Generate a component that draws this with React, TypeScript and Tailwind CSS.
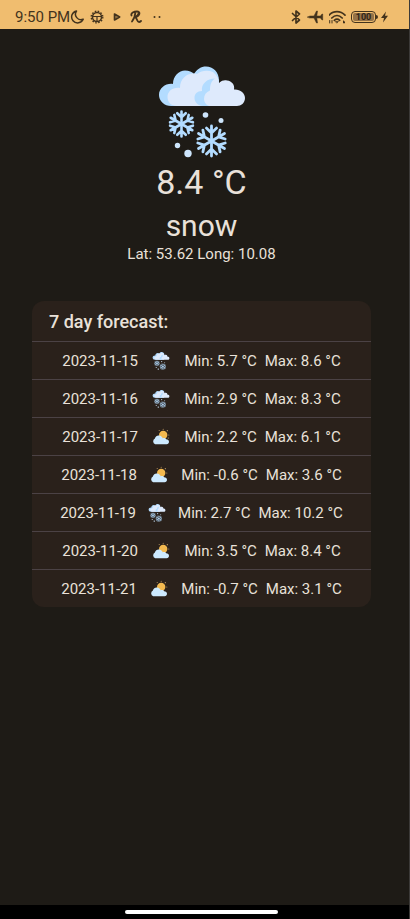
import type { ReactNode } from "react";

type Kind = "snow" | "cloudySun" | "partlySunny";

type Day = { date: string; kind: Kind; min: string; max: string };

const days: Day[] = [
  { date: "2023-11-15", kind: "snow", min: "5.7", max: "8.6" },
  { date: "2023-11-16", kind: "snow", min: "2.9", max: "8.3" },
  { date: "2023-11-17", kind: "partlySunny", min: "2.2", max: "6.1" },
  { date: "2023-11-18", kind: "cloudySun", min: "-0.6", max: "3.6" },
  { date: "2023-11-19", kind: "snow", min: "2.7", max: "10.2" },
  { date: "2023-11-20", kind: "cloudySun", min: "3.5", max: "8.4" },
  { date: "2023-11-21", kind: "cloudySun", min: "-0.7", max: "3.1" },
];

function Flake({ x, y, r, w }: { x: number; y: number; r: number; w: number }) {
  return (
    <g transform={`translate(${x} ${y})`} stroke="#b3dcff" strokeWidth={w} strokeLinecap="round" strokeLinejoin="round" fill="none">
      {[0, 60, 120, 180, 240, 300].map((a) => (
        <g key={a} transform={`rotate(${a})`}>
          <path d={`M0 0V${-r}M${-r * 0.34} ${-r * 0.86}L0 ${-r * 0.54}L${r * 0.34} ${-r * 0.86}`} />
        </g>
      ))}
    </g>
  );
}

function SnowIcon({ className }: { className: string }) {
  return (
    <svg viewBox="0 0 90 92" className={className} aria-hidden="true">
      <path
        d="M14 40A12 11 0 0 1 2 29C2 22 9 17 16 18C16 10 22 4.500 28 4.500C32 4.500 35 6 37 8C40 3 44 .5 49 .5C56 .5 62 6 62 14.500L61 40Z"
        fill="#b3dcff"
      />
      <path
        d="M20 40C14 40 10.500 36 10.500 31C10.500 25 16 21 23 22C23 12 31 6 40 8C45 4 51 4 56 6C60 9 62 13 62 17C65 14 68 14 70 14.500C75 15 78 19 77 23.500C83 23 88 27 88 32C88 37 84 40 80 40Z"
        fill="#deeafc"
      />
      <path
        d="M46 40C41 40 37.500 36 37.500 32C37.500 28 40 25 45 25C44 18 50 12.500 58 12.500C54 15 53 19 53 24.500C49 26 47 29 47 33C47 36 49 39 52 40Z"
        fill="#b3dcff"
      />
      <Flake x={24.500} y={58} r={12.500} w={2.600} />
      <Flake x={54.500} y={75} r={15} w={2.800} />
      <circle cx="48.500" cy="49" r="2.800" fill="#cde5fb" />
      <circle cx="64" cy="54.500" r="2.500" fill="#cde5fb" />
      <circle cx="20.500" cy="79.500" r="2.700" fill="#cde5fb" />
      <circle cx="31" cy="87.500" r="3.700" fill="#cde5fb" />
    </svg>
  );
}

function SunCloudIcon({ rays }: { rays: boolean }) {
  return (
    <svg viewBox="0 0 18 18" className="h-[18px] w-[18px]" aria-hidden="true">
      <circle cx="11.200" cy="7" r="4.200" fill="#f3b94f" />
      <g fill="#c9a56a">
        <circle cx="11.200" cy="1.200" r=".5" />
        <circle cx="7.200" cy="2.500" r=".5" />
        <circle cx="15.300" cy="2.700" r=".6" />
        <circle cx="16.800" cy="7" r=".5" />
        {rays && <circle cx="16.300" cy="10" r=".6" />}
      </g>
      <path
        d="M3.200 16.200A3.100 3.100 0 0 1 2.900 10.500C3.400 8.300 5.400 7.200 7.100 7.500C8.900 7.700 10.300 9 10.700 10.200C12.100 9.500 13.700 10 14.100 11.200C15.900 11.200 17 12.300 17 13.700C17 15.200 16 16.200 14.700 16.200Z"
        fill="#cdeaff"
      />
    </svg>
  );
}

function DayIcon({ kind }: { kind: Kind }) {
  if (kind === "snow") return <SnowIcon className="h-[18px] w-[18px]" />;
  return <SunCloudIcon rays={kind === "partlySunny"} />;
}

function StatusIcon({ w, children }: { w: number; children: ReactNode }) {
  return (
    <svg width={w} height="16" viewBox={`0 0 ${w} 16`} fill="none" stroke="#43331d" strokeWidth="1.500" strokeLinecap="round" strokeLinejoin="round" aria-hidden="true">
      {children}
    </svg>
  );
}

function StatusBar() {
  return (
    <header className="flex h-[29px] items-center justify-between bg-[#f0bd6f] pt-1 pr-5 pl-[15px] text-[#43331d]">
      <div className="flex items-center">
        <span className="text-[15px] leading-5">9:50 PM</span>
        <div className="flex items-center gap-[6px]">
          <StatusIcon w={14}>
            <path d="M6.500 2A6 6 0 1 0 13.200 10.200A5.500 5.500 0 0 1 6.500 2Z" strokeWidth="1.500" />
          </StatusIcon>
          <StatusIcon w={14}>
            <circle cx="7" cy="8" r="4.500" strokeWidth="1.500" />
            <circle cx="7" cy="8" r="5.800" strokeWidth="1.300" strokeDasharray="1.600 1.437" strokeLinecap="butt" />
            <path d="M3 7.500H11M7 8V12" strokeWidth="1.200" />
          </StatusIcon>
          <StatusIcon w={14}>
            <path d="M4.500 5V11L9.700 8Z" strokeWidth="1.600" />
            <path d="M4.500 8H7" strokeWidth="1" />
          </StatusIcon>
          <StatusIcon w={14}>
            <path d="M1.500 6.500C.5 4 4 2.500 7 2.500C10.500 2.500 10.500 6.500 5 8.500M5.500 3C5 7 4 10 2 12.500M5.500 8.500C7 9 7 13 9 13C10 13 10.500 12.500 11 12M8.500 3.500C9 5 7 7.500 5 8" strokeWidth="1.800" />
          </StatusIcon>
          <StatusIcon w={14}>
            <circle cx="4.500" cy="8" r="1" fill="#43331d" stroke="none" />
            <circle cx="9.500" cy="8" r="1" fill="#43331d" stroke="none" />
          </StatusIcon>
        </div>
      </div>
      <div className="flex items-center gap-1">
        <StatusIcon w={12}>
          <path d="M1.500 4.500L8.500 11L5 14V2L8.500 5L1.500 11.500" strokeWidth="1.700" />
        </StatusIcon>
        <StatusIcon w={18}>
          <path d="M.5 8L3 7H7L9.500 2H10.500L9.800 7H13.500L15 5H15.700V11H15L13.500 9H9.800L10.500 14H9.500L7 9H3Z" fill="#43331d" strokeWidth=".5" />
        </StatusIcon>
        <StatusIcon w={18}>
          <path d="M0 6.200C4.500 1.500 11.500 1.500 16 6.200M2.800 9C6 5.800 10 5.800 13.200 9M5.300 11.300C7 9.800 9 9.800 10.700 11.300" strokeWidth="1.700" />
          <path d="M6.500 12.500H9.500L8 14Z" fill="#43331d" strokeWidth=".5" />
          <path d="M.7 14V11.500M3 11.500V14M14.500 12V14H15.500V12.700H14.500" strokeWidth="1" />
        </StatusIcon>
        <div className="flex items-center">
          <span className="flex h-3 w-[25px] items-center justify-center rounded-[4px] border border-[#43331d] p-px">
            <span className="flex h-2 w-full items-center justify-center rounded-[2px] bg-[#947248] text-[9px] leading-2 font-bold text-[#2e2417]">100</span>
          </span>
          <span className="h-1 w-[2px] rounded-r-sm bg-[#43331d]" />
        </div>
        <svg width="8" height="12" viewBox="0 0 8 12" className="-ml-px" fill="#43331d" aria-hidden="true">
          <path d="M5 .5L0 7H3L2 11.500L7 4.700H4Z" />
        </svg>
      </div>
    </header>
  );
}

export default function App() {
  return (
    <div className="flex min-h-screen flex-col border-r border-[#3c3a38] bg-[#1e1b16] font-[Roboto,'Liberation_Sans',sans-serif] text-[#e9e1d9]">
      <StatusBar />
      <main className="flex grow flex-col items-center pt-[37px] pr-[38px] pl-8">
        <SnowIcon className="h-[92px] w-[90px]" />
        <p className="mt-1 text-[34px] leading-10">8.4 °C</p>
        <h1 className="mt-1 text-[30px] leading-10">snow</h1>
        <p className="text-[15px] leading-4">Lat: 53.62 Long: 10.08</p>
        <section className="mt-[39px] w-full overflow-hidden rounded-xl bg-[#2a211b]">
          <h2 className="flex h-10 items-center px-[17px] pt-px text-[18px] leading-6 font-medium">7 day forecast:</h2>
          <ul>
            {days.map((d) => (
              <li key={d.date} className="flex h-[38px] items-center justify-evenly border-t border-[#4b4245] px-4 text-[15px] leading-5">
                <span>{d.date}</span>
                <DayIcon kind={d.kind} />
                <span className="flex gap-2">
                  <span>Min: {d.min} °C</span>
                  <span>Max: {d.max} °C</span>
                </span>
              </li>
            ))}
          </ul>
        </section>
      </main>
      <footer className="flex h-[14px] items-center justify-center bg-black pr-[7px]">
        <div className="h-1 w-[153px] rounded-full bg-white" />
      </footer>
    </div>
  );
}
